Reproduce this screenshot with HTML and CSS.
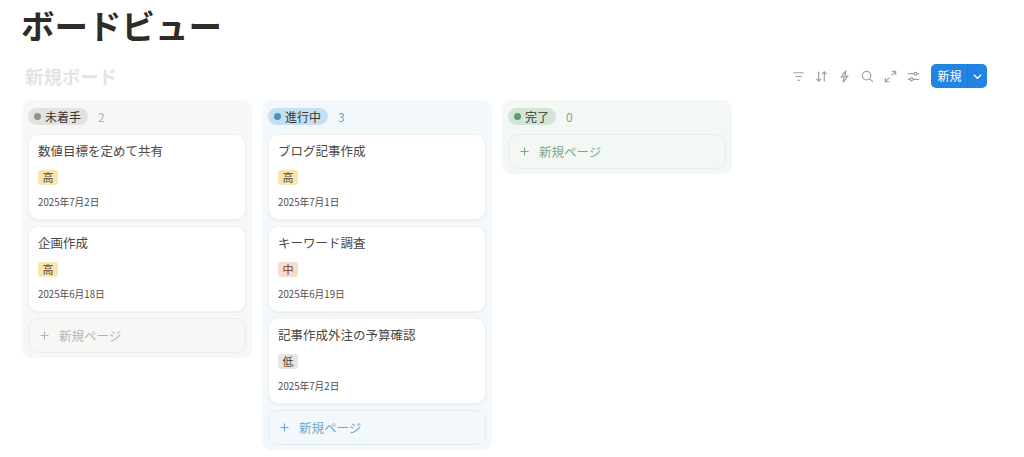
FILE: index.html
```html
<!DOCTYPE html>
<html lang="ja">
<head>
<meta charset="utf-8">
<title>ボードビュー</title>
<link rel="stylesheet" href="styles.css">
</head>
<body>
<h1 class="page-title">ボードビュー</h1>
<div class="toolbar">
  <div class="board-name">新規ボード</div>
  <div class="tools">
    <svg class="tool" viewBox="0 0 16 16"><path d="M2.500 4h11M4.500 8h7M6.500 12h3"/></svg>
    <svg class="tool" viewBox="0 0 16 16"><path d="M5 13V3M2.500 10.500 5 13l2.500-2.500M11 3v10M8.500 5.500 11 3l2.500 2.500"/></svg>
    <svg class="tool" viewBox="0 0 16 16"><path d="M9.500 1.800 4.500 8.500h3l-1 5.700 5-6.700h-3z"/></svg>
    <svg class="tool" viewBox="0 0 16 16"><circle cx="7" cy="7" r="4.500"/><path d="m10.300 10.300 3.500 3.500"/></svg>
    <svg class="tool" viewBox="0 0 16 16"><path d="M9.500 2.500h4v4M13.500 2.500l-4.500 4.500M6.500 13.500h-4v-4M2.500 13.500 7 9"/></svg>
    <svg class="tool" viewBox="0 0 16 16"><path d="M2 5h6.500M11.500 5H14M2 11h2.500M7.500 11H14"/><circle cx="10" cy="5" r="1.500"/><circle cx="6" cy="11" r="1.500"/></svg>
    <div class="new-btn">
      <span class="new-label">新規</span>
      <span class="new-caret"><svg viewBox="0 0 12 12"><path d="m2 4 4 4 4-4"/></svg></span>
    </div>
  </div>
</div>
<main class="board">
  <section class="col col-gray">
    <header class="col-head"><span class="status"><i class="dot"></i>未着手</span><span class="count">2</span></header>
    <article class="card"><h2>数値目標を定めて共有</h2><span class="tag tag-high">高</span><time>2025年7月2日</time></article>
    <article class="card"><h2>企画作成</h2><span class="tag tag-high">高</span><time>2025年6月18日</time></article>
    <div class="add"><svg class="plus" viewBox="0 0 10 10"><path d="M5 .5v9M.5 5h9"/></svg>新規ページ</div>
  </section>
  <section class="col col-blue">
    <header class="col-head"><span class="status"><i class="dot"></i>進行中</span><span class="count">3</span></header>
    <article class="card"><h2>ブログ記事作成</h2><span class="tag tag-high">高</span><time>2025年7月1日</time></article>
    <article class="card"><h2>キーワード調査</h2><span class="tag tag-mid">中</span><time>2025年6月19日</time></article>
    <article class="card"><h2>記事作成外注の予算確認</h2><span class="tag tag-low">低</span><time>2025年7月2日</time></article>
    <div class="add"><svg class="plus" viewBox="0 0 10 10"><path d="M5 .5v9M.5 5h9"/></svg>新規ページ</div>
  </section>
  <section class="col col-green">
    <header class="col-head"><span class="status"><i class="dot"></i>完了</span><span class="count">0</span></header>
    <div class="add"><svg class="plus" viewBox="0 0 10 10"><path d="M5 .5v9M.5 5h9"/></svg>新規ページ</div>
  </section>
</main>
</body>
</html>
```
FILE: styles.css
```css
* { box-sizing: border-box; }
html, body { height: 100%; }
body {
  margin: 0;
  padding: 0 37px 0 22px;
  background: #fff;
  color: #37352f;
  font-family: "Noto Sans CJK JP", "Noto Sans", sans-serif;
  overflow: hidden;
}
.page-title {
  margin: 0 0 0 -1px;
  height: 61px;
  padding-top: 1px;
  font-size: 33.500px;
  line-height: 48px;
  font-weight: 700;
  color: #2f2c28;
}
.toolbar {
  display: flex;
  align-items: center;
  justify-content: space-between;
  height: 39px;
  padding-bottom: 9px;
}
.board-name {
  padding-left: 3px;
  font-size: 18.400px;
  font-weight: 700;
  color: #e3e3e2;
}
.tools { display: flex; align-items: center; gap: 8px; }
.tool {
  width: 15px;
  height: 15px;
  fill: none;
  stroke: #a3a29e;
  stroke-width: 1.300;
}
.new-btn {
  display: flex;
  align-items: stretch;
  height: 24px;
  width: 56px;
  margin-left: 2px;
  border-radius: 5px;
  background: #2383e2;
  color: #fff;
  font-size: 12px;
  font-weight: 400;
  line-height: 24px;
}
.new-label { flex: 1; padding-left: 1px; text-align: center; }
.new-caret {
  display: flex;
  align-items: center;
  justify-content: center;
  width: 20px;
  border-left: 1px solid rgba(0, 0, 0, .08);
}
.new-caret svg { width: 11px; height: 11px; fill: none; stroke: #fff; stroke-width: 1.500; }
.board { display: flex; align-items: flex-start; gap: 10px; }
.col {
  display: flex;
  flex-direction: column;
  gap: 6px;
  width: 230px;
  padding: 0 6px 5px;
  border-radius: 9px;
}
.col-head {
  display: flex;
  align-items: center;
  height: 34px;
  padding-bottom: 1px;
  margin-bottom: -6px;
}
.status {
  display: inline-flex;
  align-items: center;
  gap: 4px;
  height: 17px;
  padding: 0 7px 0 6px;
  border-radius: 9px;
  font-size: 12px;
  line-height: 17px;
  color: #37352f;
}
.dot { width: 7px; height: 7px; border-radius: 50%; }
.count { margin-left: 10px; font-size: 12px; }
.card {
  display: flex;
  flex-direction: column;
  align-items: flex-start;
  height: 86px;
  padding: 7px 9px 0;
  background: #fff;
  border: 1px solid rgba(55, 53, 47, .07);
  border-radius: 10px;
  box-shadow: 0 1px 2px rgba(55, 53, 47, .06);
}
.card h2 {
  margin: 0;
  height: 18px;
  font-size: 12.500px;
  line-height: 18px;
  font-weight: 400;
  color: #4a4843;
}
.tag {
  margin-top: 10px;
  width: 20px;
  height: 15px;
  border-radius: 3px;
  font-size: 11px;
  line-height: 15px;
  text-align: center;
  color: #5a4a2c;
}
.tag-high { background: #fbe4ac; }
.tag-mid { background: #f9dcc9; color: #6f4028; }
.tag-low { background: #e6e5e1; color: #44423d; }
.card time {
  margin-top: 10px;
  font-size: 9.700px;
  line-height: 14px;
  color: #4f4d48;
}
.add {
  display: flex;
  align-items: center;
  height: 35px;
  padding-left: 11px;
  border-radius: 10px;
  border: 1px solid rgba(55, 53, 47, .06);
  font-size: 12.500px;
}
.plus {
  width: 9px;
  height: 9px;
  margin-right: 10px;
  fill: none;
  stroke: currentColor;
  stroke-width: 1.200;
}
.col-gray { background: #f7f7f5; }
.col-gray .status { background: #e3e2e0; }
.col-gray .dot { background: #91918e; }
.col-gray .count, .col-gray .add { color: #b5b4b0; }
.col-blue { background: #f2f8fc; }
.col-blue .status { background: #c5e1f1; }
.col-blue .dot { background: #4a93c0; }
.col-blue .count, .col-blue .add { color: #6fa5c7; }
.col-green { background: #f3f8f4; }
.col-green .status { background: #d3e6d6; }
.col-green .dot { background: #5f9a70; }
.col-green .count, .col-green .add { color: #7ba888; }
```
